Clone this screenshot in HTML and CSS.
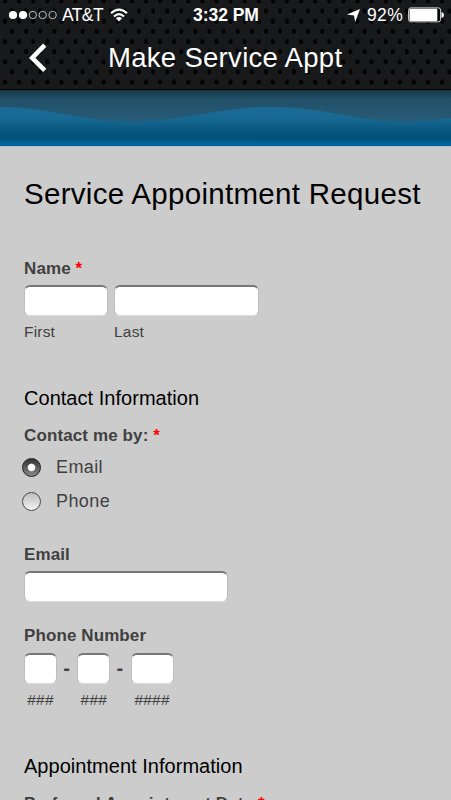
FILE: index.html
```html
<!DOCTYPE html>
<html lang="en">
<head>
<meta charset="utf-8">
<meta name="viewport" content="width=device-width">
<title>Make Service Appt</title>
<link rel="stylesheet" href="styles.css">
</head>
<body>
<header class="top">
  <svg class="mesh" width="451" height="90" aria-hidden="true">
    <defs><pattern id="holes" width="14.1" height="20.3" patternUnits="userSpaceOnUse" patternTransform="translate(-2 -4)">
      <rect width="14.1" height="20.3" fill="#18191b"/>
      <ellipse cx="7" cy="5.8" rx="2.5" ry="3.1" fill="#222325"/><ellipse cx="7" cy="5.1" rx="2.2" ry="2.9" fill="#030304"/>
      <ellipse cx="0" cy="15.9" rx="2.5" ry="3.1" fill="#222325"/><ellipse cx="0" cy="15.2" rx="2.2" ry="2.9" fill="#030304"/>
      <ellipse cx="14.1" cy="15.9" rx="2.5" ry="3.1" fill="#222325"/><ellipse cx="14.1" cy="15.2" rx="2.2" ry="2.9" fill="#030304"/>
    </pattern></defs>
    <rect width="451" height="90" fill="url(#holes)"/>
  </svg>
  <div class="status">
    <div class="carrier">
      <svg width="50" height="12" viewBox="0 0 50 12"><g fill="#fff"><circle cx="5" cy="6" r="4.1"/><circle cx="15" cy="6" r="4.1"/></g><g fill="none" stroke="#ddd" stroke-width=".8"><circle cx="24.8" cy="6" r="3.7"/><circle cx="34.7" cy="6" r="3.7"/><circle cx="44.6" cy="6" r="3.7"/></g></svg>
      <span class="network">AT&amp;T</span>
      <svg class="wifi" width="18" height="14" viewBox="0 0 18 14"><g fill="none" stroke="#fff" stroke-width="2.1"><path d="M1 5.3Q9-2.2 17 5.3"/><path d="M4 8.5Q9 3.8 14 8.5"/></g><path d="M5.9 10.3Q9 7.6 12.1 10.3L9 13.4Z" fill="#fff"/></svg>
    </div>
    <span class="time">3:32 PM</span>
    <div class="power">
      <svg width="13" height="13" viewBox="0 0 13 13"><path d="M13 0L8.2 13L7 6.4L0 5.5Z" fill="#fff"/></svg>
      <span class="percent">92%</span>
      <svg class="battery" width="36" height="16" viewBox="0 0 36 16"><rect x=".6" y=".9" width="32" height="13.9" rx="2.2" fill="#08090a" stroke="#d5d5d5" stroke-width="1"/><rect x="1.5" y="1.8" width="27.8" height="12.1" rx="1" fill="#fff"/><path d="M33.5 5Q36 5.6 36 8T33.5 11Z" fill="#fff"/></svg>
    </div>
  </div>
  <div class="nav">
    <svg class="back" width="18" height="30" viewBox="0 0 18 30"><path d="M15.7 2.2L3.2 15L15.7 27.3" fill="none" stroke="#fff" stroke-width="4.6"/></svg>
    <h1 class="nav-title">Make Service Appt</h1>
  </div>
</header>
<svg class="banner" width="451" height="57" viewBox="0 90 451 57" aria-hidden="true">
  <defs>
    <linearGradient id="sky" x2="0" y2="1"><stop stop-color="#173745"/><stop offset=".15" stop-color="#215067"/><stop offset=".55" stop-color="#285b77"/><stop offset="1" stop-color="#285b77"/></linearGradient>
    <linearGradient id="sea" gradientUnits="userSpaceOnUse" x1="0" y1="106" x2="0" y2="146"><stop stop-color="#1b6b97"/><stop offset=".35" stop-color="#166891"/><stop offset=".65" stop-color="#07557e"/><stop offset=".8" stop-color="#005079"/><stop offset=".88" stop-color="#005c8d"/><stop offset=".93" stop-color="#00659c"/><stop offset="1" stop-color="#00629a"/></linearGradient>
  </defs>
  <rect y="90" width="451" height="56" fill="url(#sky)"/>
  <path d="M0 107C48 107 83 121.5 130 121.5C183 121.5 220 107 270 107C323 107 357 121.5 405 121.5Q430 121.5 451 118V146H0Z" fill="url(#sea)"/>
  <rect y="146" width="451" height="1" fill="#b7bfcc"/>
</svg>
<main class="form">
  <h2 class="heading">Service Appointment Request</h2>
  <section class="name">
    <div class="label label-name">Name <b class="req">*</b></div>
    <div class="row">
      <div class="field"><input class="box first" aria-label="First"><span class="hint">First</span></div>
      <div class="field"><input class="box last" aria-label="Last"><span class="hint">Last</span></div>
    </div>
  </section>
  <section class="contact">
    <h3 class="sub sub-contact">Contact Information</h3>
    <div class="label label-by">Contact me by: <b class="req">*</b></div>
    <label class="choice"><i class="radio on"></i><span>Email</span></label>
    <label class="choice"><i class="radio"></i><span>Phone</span></label>
  </section>
  <section class="email">
    <div class="label label-email">Email</div>
    <input class="box address" aria-label="Email">
  </section>
  <section class="phone">
    <div class="label label-phone">Phone Number</div>
    <div class="row phones">
      <div class="field center"><input class="box code" aria-label="Area"><span class="hint">###</span></div>
      <span class="dash">-</span>
      <div class="field center"><input class="box code" aria-label="Prefix"><span class="hint">###</span></div>
      <span class="dash">-</span>
      <div class="field center"><input class="box line" aria-label="Line"><span class="hint">####</span></div>
    </div>
  </section>
  <section class="appointment">
    <h3 class="sub sub-appt">Appointment Information</h3>
    <div class="label label-date">Preferred Appointment Date <b class="req">*</b></div>
  </section>
</main>
</body>
</html>
```
FILE: styles.css
```css
* { box-sizing: border-box; }
html, body { height: 800px; overflow: hidden; }
body { margin: 0; background: #ccc; font-family: "Liberation Sans", Arial, sans-serif; color: #404040; }
svg { display: block; flex: none; }
h1, h2, h3 { margin: 0; font-weight: 400; white-space: nowrap; }
.top { position: relative; height: 90px; overflow: hidden; border-bottom: 1px solid #020203; color: #fff; }
.mesh { position: absolute; top: 0; left: 0; z-index: -1; }
.status { display: grid; grid-template-columns: 1fr auto 1fr; align-items: center; height: 29px; padding: 0 7px 0 8px; white-space: nowrap; }
.carrier, .power { display: flex; align-items: center; }
.network { margin-left: 4px; padding-top: 1px; font-size: 17.5px; letter-spacing: -.6px; line-height: 29px; }
.wifi { margin-left: 7px; }
.time { padding-top: 1px; font-size: 17.5px; font-weight: 700; line-height: 29px; letter-spacing: -.05px; }
.power { justify-content: flex-end; }
.percent { margin-left: 7px; padding-top: 1px; font-size: 17.5px; line-height: 29px; letter-spacing: .3px; }
.battery { margin-left: 5px; }
.nav { display: flex; align-items: center; height: 58px; padding-left: 29px; }
.back { margin-right: 61px; }
.nav-title { font-size: 27.5px; line-height: 58px; letter-spacing: .3px; }
.form { padding: 25px 24px 0; }
.heading { height: 84px; color: #000; font-size: 29.5px; line-height: 43px; letter-spacing: .3px; }
.label { font-size: 17px; line-height: 20px; font-weight: 700; white-space: nowrap; }
.req { color: #f00; font-weight: 700; }
.row { display: flex; gap: 6px; }
.name { height: 125px; padding-top: 2px; }
.label-name { padding-top: 1px; margin-bottom: -1px; letter-spacing: .1px; }
.name .row, .phone .row { margin-top: 7px; }
.field { display: flex; flex-direction: column; }
.center { align-items: center; }
.box { display: block; height: 31px; margin: 0; padding: 0; background: #fff; border: 1px solid #bdbdbd; border-top: 2px solid #777; border-bottom-color: #ddd; border-radius: 6px; outline: 0; }
.first { width: 84px; }
.last { width: 145px; }
.hint { margin-top: 6px; font-size: 15.5px; line-height: 20px; letter-spacing: .2px; }
.contact { height: 161px; padding-top: 5px; }
.sub { color: #000; font-size: 20px; line-height: 24px; letter-spacing: .03px; }
.label-by { margin: 16px 0 4px; letter-spacing: .12px; }
.choice { display: flex; align-items: center; gap: 15px; height: 34px; margin-left: -2px; font-size: 18px; letter-spacing: .4px; }
.radio { width: 19px; height: 19px; border: 1.3px solid #4b4b4b; border-radius: 50%; background: linear-gradient(#bdbdbd, #f3f3f3); }
.radio.on { border-color: #222; background: radial-gradient(circle, #fff 0 3px, #ccc 3.7px, transparent 4.2px), linear-gradient(#333, #888); }
.email { height: 82px; padding-top: 2px; }
.label-email { padding-top: 1px; margin-bottom: -1px; letter-spacing: .1px; }
.address { width: 204px; margin-top: 7px; }
.phone { height: 129px; padding-top: 2px; }
.label-phone { letter-spacing: .1px; }
.phones { gap: 0; }
.code { width: 33px; }
.line { width: 43px; }
.dash { width: 20.3px; padding-right: 1px; text-align: center; font-size: 20px; font-weight: 700; line-height: 31px; }
.appointment { padding-top: 1px; }
.label-date { margin-top: 16px; letter-spacing: .12px; }
```
